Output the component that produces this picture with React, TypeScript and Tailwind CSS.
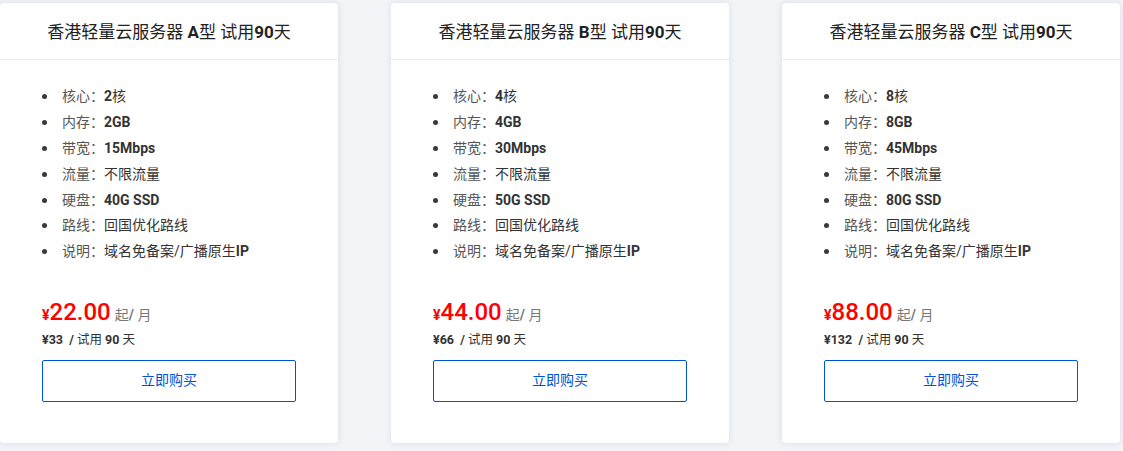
const plans = [
  { type: 'A', core: '2', mem: '2GB', bw: '15Mbps', disk: '40G SSD', price: '22.00', trial: '33' },
  { type: 'B', core: '4', mem: '4GB', bw: '30Mbps', disk: '50G SSD', price: '44.00', trial: '66' },
  { type: 'C', core: '8', mem: '8GB', bw: '45Mbps', disk: '80G SSD', price: '88.00', trial: '132' },
];

const font = { fontFamily: 'Roboto, "Noto Sans CJK SC", sans-serif' };

function Row({ label, children }: { label: string; children: React.ReactNode }) {
  return (
    <li className="flex items-center h-[25.8px]">
      <span className="w-[5px] h-[5px] rounded-full bg-[#3a3a3a] mr-[15px]" />
      <span className="text-[#555]">{label}：</span>
      <span className="text-[#333]">{children}</span>
    </li>
  );
}

function PlanCard({ plan }: { plan: (typeof plans)[number] }) {
  return (
    <div className="w-[338px] shrink-0 bg-white rounded-[4px] shadow-[0_0_6px_rgba(200,205,225,0.6)] overflow-hidden">
      <div className="h-[57px] pt-[3px] flex items-center justify-center border-b border-[#e6e9f0] text-[17px] text-[#222]">
        香港轻量云服务器&nbsp;<span className="font-bold">{plan.type}</span>型&nbsp;试用<span className="font-bold">90</span>天
      </div>
      <div className="px-[42px] pt-[24px] pb-[41px]">
        <ul className="text-[14px]">
          <Row label="核心"><b className="font-bold">{plan.core}</b>核</Row>
          <Row label="内存"><b className="font-bold">{plan.mem}</b></Row>
          <Row label="带宽"><b className="font-bold">{plan.bw}</b></Row>
          <Row label="流量">不限流量</Row>
          <Row label="硬盘"><b className="font-bold">{plan.disk}</b></Row>
          <Row label="路线">回国优化路线</Row>
          <Row label="说明">域名免备案/广播原生<b className="font-bold">IP</b></Row>
        </ul>
        <div className="mt-[31px] h-[32px] flex items-baseline">
          <span className="text-[14px] text-[#ff0000] font-bold">¥</span>
          <span className="text-[24px] text-[#ff0000] font-medium leading-[32px]">{plan.price}</span>
          <span className="ml-[4px] text-[14px] text-[#777]">起<b className="font-bold">/</b> 月</span>
        </div>
        <div className="mt-[3px] h-[20px] flex items-center text-[12.5px] text-[#333]">
          <b className="font-bold">¥{plan.trial}&nbsp;&nbsp;/</b>&nbsp;试用&nbsp;<b className="font-bold">90</b>&nbsp;天
        </div>
        <button className="mt-[9px] w-full h-[42px] border border-[#0052d9] rounded-[2px] text-[14px] text-[#0052d9] bg-white">
          立即购买
        </button>
      </div>
    </div>
  );
}

export default function App() {
  return (
    <div className="w-[1123px] h-[451px] bg-[#f3f4f8] overflow-hidden" style={font}>
      <div className="flex gap-[53px] pt-[3px]">
        {plans.map((p) => (
          <PlanCard key={p.type} plan={p} />
        ))}
      </div>
    </div>
  );
}
